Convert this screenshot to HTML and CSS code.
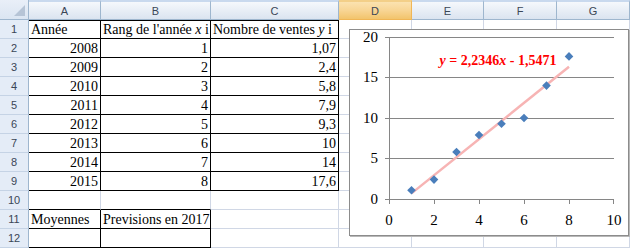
FILE: index.html
```html
<!DOCTYPE html>
<html lang="fr">
<head>
  <meta charset="UTF-8" />
  <title>Ventes - régression</title>
  <link rel="stylesheet" href="styles.css">
</head>
<body>
  <div class="sheet">
    <div class="grid">
      <!-- column headers -->
      <div class="corner"></div>
      <div class="hd">A</div>
      <div class="hd">B</div>
      <div class="hd">C</div>
      <div class="hd sel">D</div>
      <div class="hd">E</div>
      <div class="hd">F</div>
      <div class="hd">G</div>

      <div class="rh">1</div>
      <div class="c bt br bb"><span>Année</span></div>
      <div class="c bt br bb"><span>Rang de l'année <i>x</i> i</span></div>
      <div class="c bt br bb"><span>Nombre de ventes <i>y</i> i</span></div>
      <div class="c"></div><div class="c"></div><div class="c"></div><div class="c"></div>

      <div class="rh">2</div>
      <div class="c n br bb">2008</div>
      <div class="c n br bb">1</div>
      <div class="c n br bb">1,07</div>
      <div class="c"></div><div class="c"></div><div class="c"></div><div class="c"></div>

      <div class="rh">3</div>
      <div class="c n br bb">2009</div>
      <div class="c n br bb">2</div>
      <div class="c n br bb">2,4</div>
      <div class="c"></div><div class="c"></div><div class="c"></div><div class="c"></div>

      <div class="rh">4</div>
      <div class="c n br bb">2010</div>
      <div class="c n br bb">3</div>
      <div class="c n br bb">5,8</div>
      <div class="c"></div><div class="c"></div><div class="c"></div><div class="c"></div>

      <div class="rh">5</div>
      <div class="c n br bb">2011</div>
      <div class="c n br bb">4</div>
      <div class="c n br bb">7,9</div>
      <div class="c"></div><div class="c"></div><div class="c"></div><div class="c"></div>

      <div class="rh">6</div>
      <div class="c n br bb">2012</div>
      <div class="c n br bb">5</div>
      <div class="c n br bb">9,3</div>
      <div class="c"></div><div class="c"></div><div class="c"></div><div class="c"></div>

      <div class="rh">7</div>
      <div class="c n br bb">2013</div>
      <div class="c n br bb">6</div>
      <div class="c n br bb">10</div>
      <div class="c"></div><div class="c"></div><div class="c"></div><div class="c"></div>

      <div class="rh">8</div>
      <div class="c n br bb">2014</div>
      <div class="c n br bb">7</div>
      <div class="c n br bb">14</div>
      <div class="c"></div><div class="c"></div><div class="c"></div><div class="c"></div>

      <div class="rh">9</div>
      <div class="c n br bb">2015</div>
      <div class="c n br bb">8</div>
      <div class="c n br bb">17,6</div>
      <div class="c"></div><div class="c"></div><div class="c"></div><div class="c"></div>

      <div class="rh">10</div>
      <div class="c bb"></div>
      <div class="c bb"></div>
      <div class="c"></div>
      <div class="c"></div><div class="c"></div><div class="c"></div><div class="c"></div>

      <div class="rh">11</div>
      <div class="c br bb">Moyennes</div>
      <div class="c br bb">Previsions en 2017</div>
      <div class="c"></div>
      <div class="c"></div><div class="c"></div><div class="c"></div><div class="c"></div>

      <div class="rh">12</div>
      <div class="c br bb"></div>
      <div class="c br bb"></div>
      <div class="c"></div>
      <div class="c"></div><div class="c"></div><div class="c"></div><div class="c"></div>
    </div>

    <!-- chart object floating over the cells -->
    <div class="chart">
      <svg width="278" height="205" viewBox="0 0 278 205">
        <g class="grid-lines">
          <line x1="39" y1="7.5" x2="264" y2="7.5" />
          <line x1="39" y1="47.5" x2="264" y2="47.5" />
          <line x1="39" y1="88.5" x2="264" y2="88.5" />
          <line x1="39" y1="128.5" x2="264" y2="128.5" />
        </g>
        <g class="axis">
          <line x1="39.5" y1="7" x2="39.5" y2="169.5" />
          <line x1="39" y1="169.5" x2="264" y2="169.5" />
          <line x1="35" y1="7.5" x2="39" y2="7.5" />
          <line x1="35" y1="47.5" x2="39" y2="47.5" />
          <line x1="35" y1="88.5" x2="39" y2="88.5" />
          <line x1="35" y1="128.5" x2="39" y2="128.5" />
          <line x1="35" y1="169.5" x2="39" y2="169.5" />
          <line x1="39.5" y1="169" x2="39.5" y2="174" />
          <line x1="84.5" y1="169" x2="84.5" y2="174" />
          <line x1="129.5" y1="169" x2="129.5" y2="174" />
          <line x1="174.5" y1="169" x2="174.5" y2="174" />
          <line x1="219.5" y1="169" x2="219.5" y2="174" />
          <line x1="263.5" y1="169" x2="263.5" y2="174" />
        </g>
        <line class="trend" x1="61.5" y1="163.4" x2="219" y2="36.7" />
        <g class="points">
          <polygon points="61.5,156 65.8,160.3 61.5,164.6 57.2,160.3" />
          <polygon points="84,145.3 88.3,149.6 84,153.9 79.7,149.6" />
          <polygon points="106.5,117.7 110.8,122 106.5,126.3 102.2,122" />
          <polygon points="129,100.7 133.3,105 129,109.3 124.7,105" />
          <polygon points="151.5,89.4 155.8,93.7 151.5,98 147.2,93.7" />
          <polygon points="174,83.7 178.3,88 174,92.3 169.7,88" />
          <polygon points="196.5,51.3 200.8,55.6 196.5,59.9 192.2,55.6" />
          <polygon points="219,22.1 223.3,26.4 219,30.7 214.7,26.4" />
        </g>
      </svg>

      <!-- axis labels and equation, placed on the chart canvas -->
      <span class="yl" style="top: 0px">20</span>
      <span class="yl" style="top: 40px">15</span>
      <span class="yl" style="top: 81px">10</span>
      <span class="yl" style="top: 121px">5</span>
      <span class="yl" style="top: 162px">0</span>

      <span class="xl" style="left: 19px">0</span>
      <span class="xl" style="left: 64px">2</span>
      <span class="xl" style="left: 109px">4</span>
      <span class="xl" style="left: 154px">6</span>
      <span class="xl" style="left: 199px">8</span>
      <span class="xl" style="left: 244px">10</span>

      <span class="equation"><i>y</i> = 2,2346<i>x</i> - 1,5471</span>
    </div>
  </div>
</body>
</html>
```

FILE: styles.css
```css
:root {
  --grid-line: #d0d7e5;
  --head-line: #9eb6ce;
  --head-font: 'Liberation Sans', Arial, sans-serif;
  --serif: 'Liberation Serif', 'Times New Roman', serif;
}

* { box-sizing: border-box; }

body {
  margin: 0;
  background: #fff;
  overflow: hidden;
}

.sheet {
  position: relative;
  width: 630px;
  height: 250px;
}

.grid {
  display: grid;
  grid-template-columns: 29px 72px 110px 128px 73px 72px 73px 1fr;
  grid-template-rows: 20px repeat(12, 19px);
}

.corner {
  position: relative;
  background: linear-gradient(#e9eff8, #dbe5f2);
  border-right: 1px solid var(--head-line);
  border-bottom: 1px solid var(--head-line);
}

.corner::after {
  content: '';
  position: absolute;
  right: 3px;
  bottom: 3px;
  width: 11px;
  height: 11px;
  background: #b6c4d6;
  clip-path: polygon(100% 0, 100% 100%, 0 100%);
}

.hd {
  display: flex;
  align-items: center;
  justify-content: center;
  font-family: var(--head-font);
  font-size: 11px;
  color: #3a4656;
  background: linear-gradient(#f5f8fc 0, #e8eef6 50%, #dbe4f0 100%);
  border-top: 2px solid #c9d9ee;
  border-right: 1px solid var(--head-line);
  border-bottom: 1px solid var(--head-line);
}

.hd.sel {
  background: linear-gradient(#fbe2b0 0, #f8d594 50%, #f2c46c 100%);
  border-top-color: #f3cf88;
  border-right-color: #f0b656;
  border-bottom-color: #f0b656;
}

.rh {
  display: flex;
  align-items: center;
  justify-content: center;
  font-family: var(--head-font);
  font-size: 11px;
  color: #3a4656;
  background: #e4ecf7;
  border-right: 1px solid var(--head-line);
  border-bottom: 1px solid #c5d3e5;
}

.c {
  display: flex;
  align-items: flex-end;
  padding: 0 2px 1px 2px;
  font-family: var(--serif);
  font-size: 14px;
  line-height: 15px;
  color: #000;
  white-space: nowrap;
  overflow: hidden;
  border-right: 1px solid var(--grid-line);
  border-bottom: 1px solid var(--grid-line);
}

.c i { font-style: italic; }

.n { justify-content: flex-end; }

.br { border-right-color: #000; }
.bb { border-bottom-color: #000; }
.bt { border-top: 1px solid #000; }

/* chart object */
.chart {
  position: absolute;
  left: 349px;
  top: 29px;
  width: 280px;
  height: 207px;
  background: #fff;
  border: 1px solid #8c8c8c;
  box-shadow: 1px 1px 0 #b8b8b8;
  font-family: var(--serif);
}

.chart svg { display: block; }

.grid-lines line,
.axis line {
  stroke: #868686;
  stroke-width: 1;
}

.trend {
  stroke: #f7b4b4;
  stroke-width: 2.5;
}

.points polygon { fill: #4a7ebb; }

.yl, .xl {
  position: absolute;
  font-size: 15px;
  line-height: 15px;
  color: #000;
}

.yl {
  left: 0;
  width: 28px;
  text-align: right;
}

.xl {
  top: 183px;
  width: 40px;
  text-align: center;
}

.equation {
  position: absolute;
  left: 78px;
  top: 24px;
  width: 140px;
  text-align: center;
  font-size: 14px;
  line-height: 14px;
  font-weight: bold;
  color: #ff0000;
  white-space: nowrap;
}
```
